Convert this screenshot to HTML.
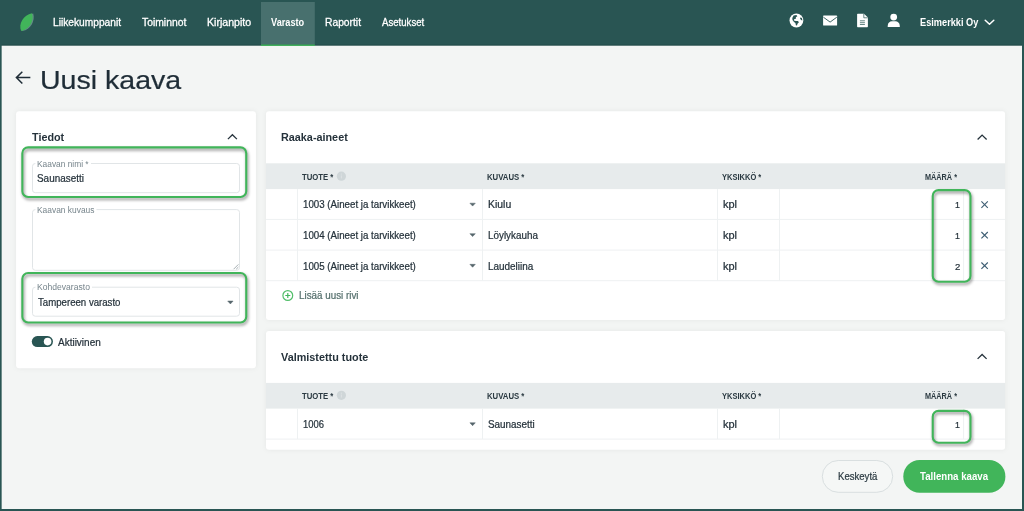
<!DOCTYPE html>
<html lang="fi"><head><meta charset="utf-8"><title>Uusi kaava</title>
<style>
html,body{margin:0;padding:0}
body{width:1024px;height:511px;overflow:hidden;background:#f3f5f4;position:relative;font-family:"Liberation Sans",sans-serif;}
svg{position:absolute;left:0;top:0;overflow:visible}
.t{position:absolute;white-space:nowrap;transform-origin:0 50%;display:block}
.hl{filter:drop-shadow(1px 2.4px 1.7px rgba(0,0,0,.45))}
.cs{filter:drop-shadow(0 0.6px 2.5px rgba(0,0,0,.06))}
</style></head>
<body>
<svg width="1024" height="511" viewBox="0 0 1024 511">
<rect x="0" y="0" width="1024.00" height="45.70" fill="#214a48" />
<rect x="0" y="0" width="1024.00" height="44.60" fill="#295553" />
<rect x="261" y="2" width="53.80" height="42.60" fill="#48706e" />
<rect x="261" y="44.5" width="53.80" height="1.40" fill="#41b55a" />
<path d="M22.3 31.1 C19.2 24.3 24.5 15 33.2 13.4 C35.4 20.6 30.8 29.5 22.3 31.1Z" fill="#668b89"/><path d="M21.2 31 C18 24.2 23.4 14.9 32 13.3 C34.4 20.5 29.8 29.4 21.2 31Z" fill="#41b55a"/>
<circle cx="796.4" cy="20.5" r="6.9" fill="#fff"/>
<path d="M793.6 15.6 l2.8 -0.6 l1 1.2 l-1.6 1 l0.3 1.3 l-1.9 0.7 l-0.4 1.2 l2 0.5 l2.2 0.2 l0.9 1.2 l-1.4 1.4 l-0.5 1.7 l-1.1 -0.1 l-0.5 -2.2 l-1.4 -1.1 l-1.5 -1.9 l-0.2 -2.2z" fill="#295553"/>
<path d="M800.6 17.2 l1.4 1 l0.4 2.2 l-1.4 -0.4 l-0.8 -1.4z" fill="#295553"/>
<rect x="823.1" y="15.6" width="14" height="9.9" rx="0.6" fill="#fff"/>
<path d="M823.4 17.2 L830.1 22.1 L836.8 17.2" fill="none" stroke="#295553" stroke-width="0.9"/>
<path d="M857.1 14.4 a0.7 0.7 0 0 1 .7 -.7 h6.2 l3.9 3.9 v9 a0.7 0.7 0 0 1 -.7 .7 h-9.4 a0.7 0.7 0 0 1 -.7 -.7z" fill="#fff"/>
<path d="M863.8 13.9 v3.9 h3.9" fill="none" stroke="#295553" stroke-width="0.7"/>
<path d="M859.9 20.8 h5 M859.9 22.7 h5 M859.9 24.5 h5" stroke="#3f6866" stroke-width="0.8"/>
<circle cx="893.7" cy="17.1" r="3.4" fill="#fff"/>
<path d="M887.7 27.1 v-1.2 c0 -3 2.2 -4.6 4.2 -4.6 h3.6 c2 0 4.3 1.6 4.3 4.6 v1.2z" fill="#fff"/>
<path d="M985.2 20.2 L989.5 24.3 L993.8 20.2" fill="none" stroke="#fff" stroke-width="1.5" stroke-linecap="round" stroke-linejoin="round"/>
<path d="M29.6 77.6 H16.6 M21.8 72.2 L16.4 77.6 L21.8 83" fill="none" stroke="#1f2d37" stroke-width="1.5" stroke-linecap="square" stroke-linejoin="miter"/>
<rect class="cs" x="16.1" y="111.2" width="239.80" height="257.10" rx="3" fill="#fff"/>
<rect class="cs" x="266" y="111.2" width="739.10" height="208.80" rx="3" fill="#fff"/>
<rect class="cs" x="266" y="331" width="739.10" height="118.80" rx="3" fill="#fff"/>
<path transform="translate(232.4 136.9)" d="M-4.5 2.2 L0 -2.2 L4.5 2.2" fill="none" stroke="#25323b" stroke-width="1.3" stroke-linecap="butt" stroke-linejoin="miter"/>
<path transform="translate(982.1 137.3)" d="M-4.5 2.2 L0 -2.2 L4.5 2.2" fill="none" stroke="#25323b" stroke-width="1.3" stroke-linecap="butt" stroke-linejoin="miter"/>
<path transform="translate(982.1 356.7)" d="M-4.5 2.2 L0 -2.2 L4.5 2.2" fill="none" stroke="#25323b" stroke-width="1.3" stroke-linecap="butt" stroke-linejoin="miter"/>
<rect x="32.5" y="163.5" width="207.00" height="29.20" rx="2.8" fill="#fff" stroke="#e1e5e7" stroke-width="1"/>
<rect x="35.5" y="161" width="55.50" height="5.00" fill="#fff" />
<rect x="32.5" y="209.6" width="207.00" height="60.70" rx="2.8" fill="#fff" stroke="#e1e5e7" stroke-width="1"/>
<rect x="35.5" y="207.1" width="61.00" height="5.00" fill="#fff" />
<rect x="32.5" y="287.2" width="207.00" height="29.00" rx="2.8" fill="#fff" stroke="#e1e5e7" stroke-width="1"/>
<rect x="35.5" y="284.7" width="56.50" height="5.00" fill="#fff" />
<path d="M233.6 269.2 L238.4 264.4 M236.2 269.2 L238.4 267" stroke="#808c92" stroke-width="0.7" fill="none"/>
<path transform="translate(230.4 302.50)" d="M-2.7 -1.45 H2.7 L0 1.45Z" fill="#56666c" stroke="#56666c" stroke-width="0.5" stroke-linejoin="round"/>
<rect x="31.8" y="336.1" width="21.20" height="11.00" fill="#295553" rx="5.5" />
<circle cx="47.6" cy="341.6" r="3.8" fill="#fff"/>
<rect x="266" y="163.3" width="739.10" height="25.80" fill="#e7ebec" />
<rect x="266" y="218.9" width="739.10" height="1.00" fill="#eef1f2" />
<rect x="266" y="249.6" width="739.10" height="1.00" fill="#eef1f2" />
<rect x="266" y="280.2" width="739.10" height="1.00" fill="#eef1f2" />
<rect x="297.0" y="189.1" width="1.00" height="91.60" fill="#eef1f2" />
<rect x="482.0" y="189.1" width="1.00" height="91.60" fill="#eef1f2" />
<rect x="717.0" y="189.1" width="1.00" height="91.60" fill="#eef1f2" />
<rect x="779.0" y="189.1" width="1.00" height="91.60" fill="#eef1f2" />
<rect x="963.1" y="189.1" width="1.00" height="91.60" fill="#eef1f2" />
<path transform="translate(472.6 204.65)" d="M-2.7 -1.45 H2.7 L0 1.45Z" fill="#56666c" stroke="#56666c" stroke-width="0.5" stroke-linejoin="round"/>
<path transform="translate(472.6 235.15)" d="M-2.7 -1.45 H2.7 L0 1.45Z" fill="#56666c" stroke="#56666c" stroke-width="0.5" stroke-linejoin="round"/>
<path transform="translate(472.6 265.80)" d="M-2.7 -1.45 H2.7 L0 1.45Z" fill="#56666c" stroke="#56666c" stroke-width="0.5" stroke-linejoin="round"/>
<rect x="266" y="382.9" width="739.10" height="25.70" fill="#e7ebec" />
<rect x="266" y="438.6" width="739.10" height="1.00" fill="#eef1f2" />
<rect x="297.0" y="408.6" width="1.00" height="30.50" fill="#eef1f2" />
<rect x="482.0" y="408.6" width="1.00" height="30.50" fill="#eef1f2" />
<rect x="717.0" y="408.6" width="1.00" height="30.50" fill="#eef1f2" />
<rect x="779.0" y="408.6" width="1.00" height="30.50" fill="#eef1f2" />
<rect x="963.1" y="408.6" width="1.00" height="30.50" fill="#eef1f2" />
<path transform="translate(472.6 424.25)" d="M-2.7 -1.45 H2.7 L0 1.45Z" fill="#56666c" stroke="#56666c" stroke-width="0.5" stroke-linejoin="round"/>
<g transform="translate(341.4 176.2)"><circle r="4.6" fill="#cfd6d8"/><rect x="-0.5" y="-0.8" width="1" height="3" fill="#dde2e4"/><circle cy="-2.1" r="0.6" fill="#dde2e4"/></g>
<g transform="translate(341.4 395.3)"><circle r="4.6" fill="#cfd6d8"/><rect x="-0.5" y="-0.8" width="1" height="3" fill="#dde2e4"/><circle cy="-2.1" r="0.6" fill="#dde2e4"/></g>
<path transform="translate(984.6 204.6)" d="M-3.2 -3.2 L3.2 3.2 M3.2 -3.2 L-3.2 3.2" stroke="#3d5d72" stroke-width="1.1" fill="none"/>
<path transform="translate(984.6 235.2)" d="M-3.2 -3.2 L3.2 3.2 M3.2 -3.2 L-3.2 3.2" stroke="#3d5d72" stroke-width="1.1" fill="none"/>
<path transform="translate(984.6 265.7)" d="M-3.2 -3.2 L3.2 3.2 M3.2 -3.2 L-3.2 3.2" stroke="#3d5d72" stroke-width="1.1" fill="none"/>
<g transform="translate(287.8 295.5)"><circle r="4.9" fill="none" stroke="#52be6a" stroke-width="1.2"/><path d="M-2.5 0 H2.5 M0 -2.5 V2.5" stroke="#41b55a" stroke-width="1.15"/></g>
<rect x="822.3" y="460.5" width="70.4" height="31.8" rx="15.9" fill="#f5f7f6" stroke="#d9dfe0" stroke-width="1"/>
<rect x="903.3" y="460" width="102.10" height="32.80" fill="#41b55a" rx="16.4" />
<rect x="0" y="44" width="1.65" height="467.00" fill="#295553" />
<rect x="1022" y="44" width="2.00" height="467.00" fill="#295553" />
<rect x="0" y="509" width="1024.00" height="2.00" fill="#295553" />
</svg>
<svg class="hl" width="1024" height="511" viewBox="0 0 1024 511">
<rect x="22.35" y="147.40" width="223.90" height="49.60" rx="5.8" ry="5.8" fill="none" stroke="#41b55a" stroke-width="2.1"/>
<rect x="22.35" y="272.95" width="223.90" height="49.50" rx="5.8" ry="5.8" fill="none" stroke="#41b55a" stroke-width="2.1"/>
<rect x="932.75" y="190.10" width="37.70" height="91.65" rx="5.8" ry="5.8" fill="none" stroke="#41b55a" stroke-width="2.1"/>
<rect x="932.75" y="410.85" width="37.70" height="31.90" rx="5.8" ry="5.8" fill="none" stroke="#41b55a" stroke-width="2.1"/>
</svg>
<span class="t" style="left:52.80px;top:15px;font-size:11px;line-height:14px;font-weight:400;color:#fff;transform:scaleX(0.9278);-webkit-text-stroke:0.3px #fff;">Liikekumppanit</span>
<span class="t" style="left:142.00px;top:15px;font-size:11px;line-height:14px;font-weight:400;color:#fff;transform:scaleX(0.9418);-webkit-text-stroke:0.3px #fff;">Toiminnot</span>
<span class="t" style="left:206.58px;top:15px;font-size:11px;line-height:14px;font-weight:400;color:#fff;transform:scaleX(0.9631);-webkit-text-stroke:0.3px #fff;">Kirjanpito</span>
<span class="t" style="left:271.30px;top:16px;font-size:10.6px;line-height:13px;font-weight:700;color:#fff;transform:scaleX(0.8684);">Varasto</span>
<span class="t" style="left:324.60px;top:15px;font-size:11px;line-height:14px;font-weight:400;color:#fff;transform:scaleX(0.9351);-webkit-text-stroke:0.3px #fff;">Raportit</span>
<span class="t" style="left:381.70px;top:15px;font-size:11px;line-height:14px;font-weight:400;color:#fff;transform:scaleX(0.8742);-webkit-text-stroke:0.3px #fff;">Asetukset</span>
<span class="t" style="left:919.95px;top:16px;font-size:10.6px;line-height:13px;font-weight:700;color:#fff;transform:scaleX(0.8694);">Esimerkki Oy</span>
<span class="t" style="left:39.72px;top:64px;font-size:26.2px;line-height:32px;font-weight:400;color:#1f2d37;transform:scaleX(1.0904);-webkit-text-stroke:0.22px #1f2d37;">Uusi kaava</span>
<span class="t" style="left:31.90px;top:130px;font-size:11px;line-height:14px;font-weight:700;color:#25323b;transform:scaleX(0.9802);">Tiedot</span>
<span class="t" style="left:280.96px;top:130px;font-size:11px;line-height:14px;font-weight:700;color:#25323b;transform:scaleX(0.9836);">Raaka-aineet</span>
<span class="t" style="left:281.10px;top:350px;font-size:11px;line-height:14px;font-weight:700;color:#25323b;transform:scaleX(0.9847);">Valmistettu tuote</span>
<span class="t" style="left:36.75px;top:159px;font-size:8.4px;line-height:11px;font-weight:400;color:#76848b;transform:scaleX(0.9990);">Kaavan nimi *</span>
<span class="t" style="left:36.75px;top:205px;font-size:8.4px;line-height:11px;font-weight:400;color:#76848b;transform:scaleX(1.0027);">Kaavan kuvaus</span>
<span class="t" style="left:36.73px;top:282px;font-size:8.4px;line-height:11px;font-weight:400;color:#76848b;transform:scaleX(1.0238);">Kohdevarasto</span>
<span class="t" style="left:37.22px;top:172px;font-size:10.4px;line-height:13px;font-weight:400;color:#25323b;transform:scaleX(0.9542);-webkit-text-stroke:0.22px #25323b;">Saunasetti</span>
<span class="t" style="left:37.90px;top:296px;font-size:10.4px;line-height:13px;font-weight:400;color:#25323b;transform:scaleX(0.9273);-webkit-text-stroke:0.22px #25323b;">Tampereen varasto</span>
<span class="t" style="left:57.90px;top:336px;font-size:10.4px;line-height:13px;font-weight:400;color:#25323b;transform:scaleX(0.9614);-webkit-text-stroke:0.22px #25323b;">Aktiivinen</span>
<span class="t" style="left:302.20px;top:172px;font-size:8.5px;line-height:11px;font-weight:700;color:#2b3a42;transform:scaleX(0.9101);">TUOTE *</span>
<span class="t" style="left:487.24px;top:172px;font-size:8.5px;line-height:11px;font-weight:700;color:#2b3a42;transform:scaleX(0.9136);">KUVAUS *</span>
<span class="t" style="left:721.68px;top:172px;font-size:8.5px;line-height:11px;font-weight:700;color:#2b3a42;transform:scaleX(0.8841);">YKSIKKÖ *</span>
<span class="t" style="left:925.37px;top:172px;font-size:8.5px;line-height:11px;font-weight:700;color:#2b3a42;transform:scaleX(0.8571);">MÄÄRÄ *</span>
<span class="t" style="left:302.20px;top:391px;font-size:8.5px;line-height:11px;font-weight:700;color:#2b3a42;transform:scaleX(0.9101);">TUOTE *</span>
<span class="t" style="left:487.24px;top:391px;font-size:8.5px;line-height:11px;font-weight:700;color:#2b3a42;transform:scaleX(0.9136);">KUVAUS *</span>
<span class="t" style="left:721.68px;top:391px;font-size:8.5px;line-height:11px;font-weight:700;color:#2b3a42;transform:scaleX(0.8841);">YKSIKKÖ *</span>
<span class="t" style="left:925.37px;top:391px;font-size:8.5px;line-height:11px;font-weight:700;color:#2b3a42;transform:scaleX(0.8571);">MÄÄRÄ *</span>
<span class="t" style="left:303.27px;top:199px;font-size:10.0px;line-height:12px;font-weight:400;color:#25323b;transform:scaleX(0.9713);-webkit-text-stroke:0.22px #25323b;">1003 (Aineet ja tarvikkeet)</span>
<span class="t" style="left:487.72px;top:199px;font-size:10.0px;line-height:12px;font-weight:400;color:#25323b;transform:scaleX(1.0429);-webkit-text-stroke:0.22px #25323b;">Kiulu</span>
<span class="t" style="left:723.25px;top:199px;font-size:10.0px;line-height:12px;font-weight:400;color:#25323b;transform:scaleX(1.0979);-webkit-text-stroke:0.22px #25323b;">kpl</span>
<span class="t" style="left:955.04px;top:199px;font-size:9.7px;line-height:12px;font-weight:400;color:#25323b;transform:scaleX(0.9111);-webkit-text-stroke:0.22px #25323b;">1</span>
<span class="t" style="left:303.27px;top:230px;font-size:10.0px;line-height:12px;font-weight:400;color:#25323b;transform:scaleX(0.9713);-webkit-text-stroke:0.22px #25323b;">1004 (Aineet ja tarvikkeet)</span>
<span class="t" style="left:487.76px;top:230px;font-size:10.0px;line-height:12px;font-weight:400;color:#25323b;transform:scaleX(0.9860);-webkit-text-stroke:0.22px #25323b;">Löylykauha</span>
<span class="t" style="left:723.25px;top:230px;font-size:10.0px;line-height:12px;font-weight:400;color:#25323b;transform:scaleX(1.0979);-webkit-text-stroke:0.22px #25323b;">kpl</span>
<span class="t" style="left:955.04px;top:230px;font-size:9.7px;line-height:12px;font-weight:400;color:#25323b;transform:scaleX(0.9111);-webkit-text-stroke:0.22px #25323b;">1</span>
<span class="t" style="left:303.27px;top:261px;font-size:10.0px;line-height:12px;font-weight:400;color:#25323b;transform:scaleX(0.9713);-webkit-text-stroke:0.22px #25323b;">1005 (Aineet ja tarvikkeet)</span>
<span class="t" style="left:487.75px;top:261px;font-size:10.0px;line-height:12px;font-weight:400;color:#25323b;transform:scaleX(0.9933);-webkit-text-stroke:0.22px #25323b;">Laudeliina</span>
<span class="t" style="left:723.25px;top:261px;font-size:10.0px;line-height:12px;font-weight:400;color:#25323b;transform:scaleX(1.0979);-webkit-text-stroke:0.22px #25323b;">kpl</span>
<span class="t" style="left:954.65px;top:261px;font-size:9.7px;line-height:12px;font-weight:400;color:#25323b;transform:scaleX(0.9895);-webkit-text-stroke:0.22px #25323b;">2</span>
<span class="t" style="left:303.29px;top:419px;font-size:10.0px;line-height:12px;font-weight:400;color:#25323b;transform:scaleX(0.9412);-webkit-text-stroke:0.22px #25323b;">1006</span>
<span class="t" style="left:488.45px;top:419px;font-size:10.0px;line-height:12px;font-weight:400;color:#25323b;transform:scaleX(0.9892);-webkit-text-stroke:0.22px #25323b;">Saunasetti</span>
<span class="t" style="left:723.25px;top:419px;font-size:10.0px;line-height:12px;font-weight:400;color:#25323b;transform:scaleX(1.0979);-webkit-text-stroke:0.22px #25323b;">kpl</span>
<span class="t" style="left:955.04px;top:419px;font-size:9.7px;line-height:12px;font-weight:400;color:#25323b;transform:scaleX(0.9111);-webkit-text-stroke:0.22px #25323b;">1</span>
<span class="t" style="left:299.06px;top:290px;font-size:10.0px;line-height:12px;font-weight:400;color:#55706d;transform:scaleX(0.9823);-webkit-text-stroke:0.22px #55706d;">Lisää uusi rivi</span>
<span class="t" style="left:837.61px;top:470px;font-size:10.4px;line-height:13px;font-weight:400;color:#2b3a42;transform:scaleX(0.9214);-webkit-text-stroke:0.22px #2b3a42;">Keskeytä</span>
<span class="t" style="left:920.20px;top:470px;font-size:10.4px;line-height:13px;font-weight:700;color:#fff;transform:scaleX(0.9297);">Tallenna kaava</span>
</body></html>
